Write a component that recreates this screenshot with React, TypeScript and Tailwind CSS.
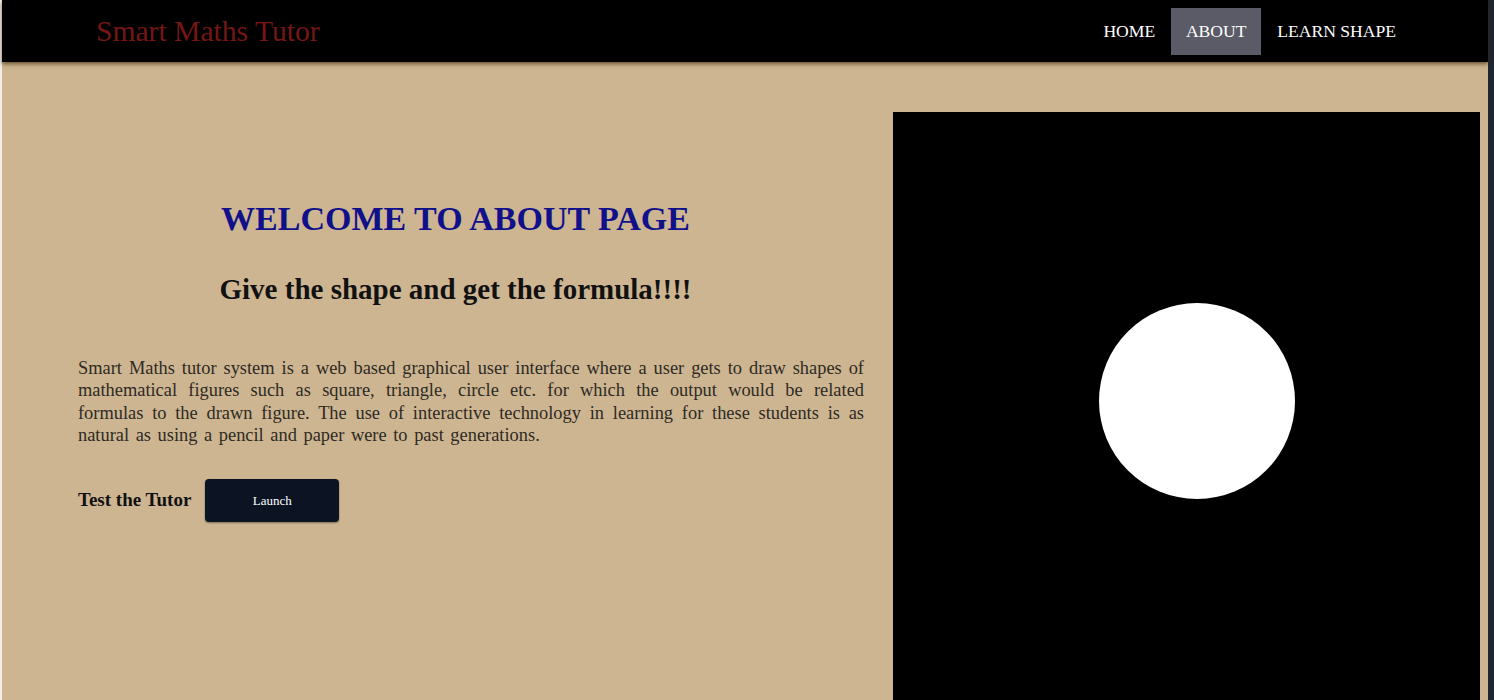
import React from "react";

export default function App() {
  const serif = { fontFamily: '"Liberation Serif", "Times New Roman", serif' };
  const lines = [
    "Smart Maths tutor system is a web based graphical user interface where a user gets to draw shapes of",
    "mathematical figures such as square, triangle, circle etc. for which the output would be related",
    "formulas to the drawn figure. The use of interactive technology in learning for these students is as",
  ];
  return (
    <div className="w-[1494px] h-[700px] overflow-hidden flex bg-[#cdb591]" style={serif}>
      <div className="w-[2px] bg-[#f3efe6]" />
      <div className="flex-1 flex flex-col min-w-0">
        <header className="h-[62px] bg-black flex items-center justify-between pl-[94px] pr-[76px] shadow-[0_2px_4px_rgba(60,40,10,0.7)] relative z-10">
          <div className="text-[29.6px] text-[#741614] leading-none mt-[2px]">Smart Maths Tutor</div>
          <nav className="flex items-center h-full">
            <a className="px-[16px] h-[47px] flex items-center text-[17.6px] text-white">HOME</a>
            <a className="h-[47px] w-[90px] justify-center flex items-center text-[17.6px] text-white bg-[#5a5b66]">ABOUT</a>
            <a className="px-[16px] h-[47px] flex items-center text-[17.6px] text-white">LEARN SHAPE</a>
          </nav>
        </header>
        <main className="flex-1 flex pt-[50px] pr-[8px] min-h-0">
          <section className="w-[891px] shrink-0 flex flex-col">
            <h1 className="mt-[87px] pl-[16px] text-center text-[34px] font-bold text-[#10108a] leading-[40px]">
              WELCOME TO ABOUT PAGE
            </h1>
            <h2 className="mt-[34px] pl-[16px] text-center text-[29px] font-bold text-[#111] leading-[32px]">
              Give the shape and get the formula!!!!
            </h2>
            <div className="mt-[52px] ml-[76px] w-[786px] text-[18.4px] leading-[22.3px] text-[#2e2a24]">
              {lines.map((l) => (
                <p key={l} className="text-justify [text-align-last:justify] whitespace-nowrap">
                  {l}
                </p>
              ))}
              <p className="[word-spacing:2px]">natural as using a pencil and paper were to past generations.</p>
            </div>
            <div className="mt-[33px] ml-[76px] flex items-center gap-[14px]">
              <span className="text-[19px] font-bold text-[#111]">Test the Tutor</span>
              <button className="w-[134px] h-[43px] rounded-[4px] bg-[#0c1424] text-white text-[13px] shadow-[0_1px_2px_rgba(0,0,0,0.4)]" style={serif}>
                Launch
              </button>
            </div>
          </section>
          <div className="w-[587px] shrink-0 bg-black relative">
            <svg width="587" height="588" className="block">
              <circle cx="304" cy="289" r="98" fill="#fff" />
            </svg>
          </div>
        </main>
      </div>
      <div className="w-[6px] bg-[#1e2632]" />
    </div>
  );
}
